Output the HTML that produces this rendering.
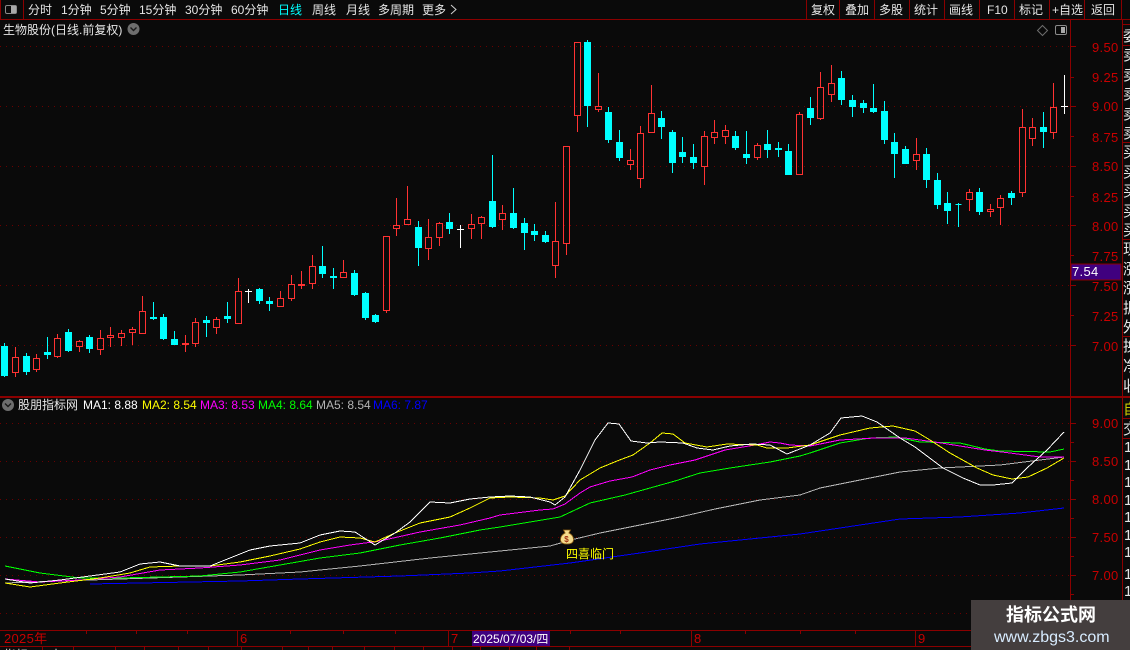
<!DOCTYPE html>
<html><head><meta charset="utf-8"><title>生物股份</title>
<style>
html,body{margin:0;padding:0;background:#0a0a0a;width:1130px;height:650px;overflow:hidden}
svg{display:block;position:absolute;left:0;top:0}
text{font-family:"Liberation Sans","WenQuanYi Zen Hei","Noto Sans CJK SC",sans-serif;font-size:12px;fill:#e6e6e6}
.ax text{fill:#c80000;font-family:"Liberation Sans",sans-serif;font-size:13px;letter-spacing:.3px}
.r text{font-size:15px;fill:#e6e6e6}
.c{shape-rendering:crispEdges;fill:none;stroke-width:1}
</style></head><body>
<svg width="1130" height="650" viewBox="0 0 1130 650" xmlns="http://www.w3.org/2000/svg">
<rect width="1130" height="650" fill="#0a0a0a"/>
<!-- grid -->
<g stroke="#6a0000" stroke-width="1" stroke-dasharray="1 5" shape-rendering="crispEdges">
<path d="M0 46.5H1070M0 106.5H1070M0 166.5H1070M0 225.5H1070M0 285.5H1070M0 345.5H1070M0 423.5H1070M0 461.5H1070M0 499.5H1070M0 537.5H1070M0 575.5H1070M0 613.5H1070"/>
</g>
<!-- candles red -->
<path class="c" stroke="#ff3232" d="M15.5 347V357M15.5 373V377M12.5 357.5h6V372.5h-6z
M36.5 354V358M36.5 370V372M33.5 358.5h6V369.5h-6z
M57.5 334V338M57.5 357V358M54.5 338.5h6V356.5h-6z
M79.5 340V341M79.5 347V352M76.5 341.5h6V346.5h-6z
M100.5 330V338M100.5 350V355M97.5 338.5h6V349.5h-6z
M110.5 327V335M110.5 338V347M107.5 335.5h6V337.5h-6z
M121.5 330V333M121.5 338V346M118.5 333.5h6V337.5h-6z
M132.5 327V329M132.5 333V345M129.5 329.5h6V332.5h-6z
M142.5 296V311M139.5 311.5h6V333.5h-6z
M185.5 335V343M185.5 345V352M182.5 343.5h6V344.5h-6z
M195.5 318V322M195.5 344V347M192.5 322.5h6V343.5h-6z
M216.5 317V319M216.5 328V334M213.5 319.5h6V327.5h-6z
M238.5 278V291M235.5 291.5h6V323.5h-6z
M280.5 291V298M277.5 298.5h6V306.5h-6z
M291.5 275V284M291.5 299V301M288.5 284.5h6V298.5h-6z
M301.5 271V284M301.5 286V289M298.5 284.5h6V285.5h-6z
M312.5 255V266M312.5 284V289M309.5 266.5h6V283.5h-6z
M343.5 260V272M340.5 272.5h6V277.5h-6z
M386.5 311V313M383.5 236.5h6V310.5h-6z
M396.5 198V225M396.5 229V236M393.5 225.5h6V228.5h-6z
M407.5 186V219M404.5 219.5h6V224.5h-6z
M428.5 219V237M428.5 249V260M425.5 237.5h6V248.5h-6z
M439.5 222V223M439.5 238V246M436.5 223.5h6V237.5h-6z
M471.5 214V224M471.5 229V239M468.5 224.5h6V228.5h-6z
M481.5 216V217M481.5 224V239M478.5 217.5h6V223.5h-6z
M502.5 205V213M502.5 220V230M499.5 213.5h6V219.5h-6z
M555.5 202V241M555.5 266V278M552.5 241.5h6V265.5h-6z
M566.5 244V255M563.5 146.5h6V243.5h-6z
M577.5 116V132M574.5 42.5h6V115.5h-6z
M598.5 73V106M598.5 110V112M595.5 106.5h6V109.5h-6z
M630.5 149V160M630.5 165V170M627.5 160.5h6V164.5h-6z
M640.5 126V133M640.5 179V188M637.5 133.5h6V178.5h-6z
M651.5 85V113M648.5 113.5h6V132.5h-6z
M704.5 131V136M704.5 167V185M701.5 136.5h6V166.5h-6z
M714.5 120V132M714.5 138V144M711.5 132.5h6V137.5h-6z
M725.5 125V130M725.5 137V144M722.5 130.5h6V136.5h-6z
M757.5 143V145M757.5 158V160M754.5 145.5h6V157.5h-6z
M799.5 112V114M796.5 114.5h6V174.5h-6z
M820.5 72V87M820.5 119V120M817.5 87.5h6V118.5h-6z
M831.5 65V83M831.5 95V102M828.5 83.5h6V94.5h-6z
M916.5 138V154M916.5 161V170M913.5 154.5h6V160.5h-6z
M969.5 189V192M969.5 200V211M966.5 192.5h6V199.5h-6z
M990.5 204V209M990.5 212V217M987.5 209.5h6V211.5h-6z
M1000.5 195V198M1000.5 208V225M997.5 198.5h6V207.5h-6z
M1022.5 109V127M1022.5 193V197M1019.5 127.5h6V192.5h-6z
M1032.5 118V127M1032.5 139V146M1029.5 127.5h6V138.5h-6z
M1053.5 83V107M1053.5 133V139M1050.5 107.5h6V132.5h-6z"/>
<!-- candles cyan -->
<path class="c" stroke="#00ffff" style="fill:#00ffff" d="M4.5 343V377M1.5 346.5h6V375.5h-6z
M26.5 353V375M23.5 356.5h6V371.5h-6z
M47.5 337V359M44.5 352.5h6V354.5h-6z
M68.5 329V352M65.5 332.5h6V350.5h-6z
M89.5 335V353M86.5 337.5h6V348.5h-6z
M153.5 302V320M150.5 317.5h6V318.5h-6z
M163.5 314V340M160.5 317.5h6V338.5h-6z
M174.5 331V345M171.5 339.5h6V344.5h-6z
M206.5 316V337M203.5 320.5h6V322.5h-6z
M227.5 302V323M224.5 316.5h6V318.5h-6z
M259.5 288V304M256.5 289.5h6V300.5h-6z
M269.5 297V311M266.5 301.5h6V303.5h-6z
M322.5 246V278M319.5 266.5h6V273.5h-6z
M333.5 268V289M330.5 276.5h6V277.5h-6z
M354.5 270V296M351.5 273.5h6V294.5h-6z
M365.5 292V320M362.5 293.5h6V317.5h-6z
M375.5 314V323M372.5 315.5h6V321.5h-6z
M418.5 221V266M415.5 227.5h6V247.5h-6z
M449.5 213V234M446.5 222.5h6V228.5h-6z
M492.5 155V228M489.5 201.5h6V226.5h-6z
M513.5 188V229M510.5 213.5h6V227.5h-6z
M524.5 218V250M521.5 223.5h6V232.5h-6z
M534.5 224V241M531.5 231.5h6V234.5h-6z
M545.5 231V243M542.5 235.5h6V241.5h-6z
M587.5 40V127M584.5 42.5h6V105.5h-6z
M608.5 107V143M605.5 112.5h6V139.5h-6z
M619.5 130V161M616.5 142.5h6V157.5h-6z
M661.5 111V139M658.5 118.5h6V126.5h-6z
M672.5 130V173M669.5 132.5h6V162.5h-6z
M682.5 137V163M679.5 152.5h6V156.5h-6z
M693.5 144V169M690.5 157.5h6V162.5h-6z
M735.5 131V150M732.5 136.5h6V147.5h-6z
M746.5 131V164M743.5 154.5h6V157.5h-6z
M767.5 130V158M764.5 144.5h6V149.5h-6z
M778.5 142V157M775.5 148.5h6V149.5h-6z
M788.5 144V175M785.5 151.5h6V174.5h-6z
M810.5 97V125M807.5 108.5h6V117.5h-6z
M841.5 71V105M838.5 78.5h6V99.5h-6z
M852.5 95V117M849.5 100.5h6V106.5h-6z
M863.5 100V113M860.5 103.5h6V107.5h-6z
M873.5 84V113M870.5 108.5h6V111.5h-6z
M884.5 101V144M881.5 111.5h6V139.5h-6z
M894.5 133V178M891.5 142.5h6V153.5h-6z
M905.5 146V164M902.5 149.5h6V163.5h-6z
M926.5 148V188M923.5 154.5h6V179.5h-6z
M937.5 173V209M934.5 180.5h6V204.5h-6z
M947.5 192V224M944.5 203.5h6V210.5h-6z
M958.5 203V227M955.5 204.5h6V204.5h-6z
M979.5 188V215M976.5 192.5h6V211.5h-6z
M1011.5 191V205M1008.5 193.5h6V197.5h-6z
M1043.5 112V148M1040.5 127.5h6V131.5h-6z"/>
<!-- white crosses -->
<path class="c" stroke="#ffffff" d="M248.5 289V303M245 291.5h7M460.5 225V248M457 229.5h7M1064.5 75V114M1061 106.5h7"/>
<!-- lines -->
<g class="c">
<polyline stroke="#0000ff" points="90,584 240,581 300,579 400,576 470,573 500,571 570,563 640,553 700,544 800,534 860,525 900,519 960,517 1020,513 1064,508"/>
<polyline stroke="#b4b4b4" points="5,583 60,581 120,579 180,577 240,575 300,572 360,566 430,558 480,553 500,551 550,546 575,539 600,533 640,525 680,517 715,509 760,500 800,495 820,488 860,480 900,472 940,468 1000,465 1040,460 1064,457"/>
<polyline stroke="#00ff00" points="5,566 40,573 80,578 120,578 160,577 200,576 240,572 280,565 320,558 360,553 400,545 440,538 480,530 500,527 530,522 560,517 590,503 625,495 650,488 675,481 700,473 730,468 770,462 800,456 810,453 840,443 870,438 895,437 920,442 960,443 985,449 1000,451 1050,452 1064,449"/>
<polyline stroke="#ff00ff" points="5,579 40,582 80,580 120,577 160,570 200,568 240,565 280,560 320,550 350,545 380,541 420,532 460,525 490,518 500,515 540,510 553,509 565,504 580,493 590,487 610,481 632,477 650,470 670,465 695,460 725,450 755,445 770,442 780,443 790,445 810,446 840,440 875,438 905,438 935,442 960,446 985,450 1010,453 1040,457 1064,457"/>
<polyline stroke="#ffff00" points="5,583 30,587 60,583 100,578 130,573 150,567 180,566 210,566 240,562 270,556 300,549 320,542 340,537 360,538 375,542 395,533 420,523 450,517 470,508 490,498 510,497 540,498 553,500 565,496 580,480 600,468 617,461 633,455 650,443 662,433 673,434 685,443 707,447 727,444 757,445 767,448 787,448 810,445 840,435 870,428 893,426 915,431 930,440 950,453 977,468 993,475 1012,479 1028,477 1047,468 1064,458"/>
<polyline stroke="#ffffff" points="5,579 30,583 60,580 90,576 120,572 140,564 160,562 180,566 210,566 230,558 250,550 270,546 300,543 320,535 340,531 355,532 375,545 395,533 410,522 430,502 450,503 470,499 490,497 510,496 530,497 550,502 555,505 565,497 580,470 595,440 608,423 619,424 631,441 647,443 660,442 683,443 697,448 713,450 730,446 752,444 770,445 787,454 810,445 830,433 841,418 862,416 877,422 900,438 915,447 943,468 963,478 980,485 993,485 1012,483 1027,468 1047,450 1064,432"/>
</g>
<!-- frame -->
<g fill="#8b0000" shape-rendering="crispEdges">
<rect x="0" y="19" width="1130" height="1"/>
<rect x="23" y="0" width="1" height="19"/>
<rect x="0" y="0" width="1" height="19"/>
<rect x="806" y="0" width="1" height="19"/><rect x="839" y="0" width="1" height="19"/><rect x="874" y="0" width="1" height="19"/><rect x="909" y="0" width="1" height="19"/><rect x="944" y="0" width="1" height="19"/><rect x="979" y="0" width="1" height="19"/><rect x="1014" y="0" width="1" height="19"/><rect x="1049" y="0" width="1" height="19"/><rect x="1084" y="0" width="1" height="19"/><rect x="1121" y="0" width="1" height="19"/>
<rect x="1070" y="20" width="1" height="610"/>
<rect x="1122" y="20" width="1" height="630"/>
<rect x="0" y="396" width="1122" height="2"/>
<rect x="0" y="630" width="1122" height="1"/>
<rect x="0" y="646" width="1122" height="1"/>
<rect x="1122" y="24" width="8" height="1"/><rect x="1122" y="45" width="8" height="1"/><rect x="1122" y="142" width="8" height="1"/><rect x="1122" y="239" width="8" height="1"/><rect x="1122" y="336" width="8" height="1"/><rect x="1122" y="396" width="8" height="2"/><rect x="1122" y="418" width="8" height="1"/><rect x="1122" y="438" width="8" height="1"/>
<!-- axis ticks -->
<path d="M1071 46h5v1h-5zM1071 77h3v1h-3zM1071 106h5v1h-5zM1071 136h3v1h-3zM1071 166h5v1h-5zM1071 196h3v1h-3zM1071 225h5v1h-5zM1071 255h3v1h-3zM1071 285h5v1h-5zM1071 315h3v1h-3zM1071 345h5v1h-5zM1071 423h5v1h-5zM1071 442h3v1h-3zM1071 461h5v1h-5zM1071 480h3v1h-3zM1071 499h5v1h-5zM1071 518h3v1h-3zM1071 537h5v1h-5zM1071 556h3v1h-3zM1071 575h5v1h-5zM1071 594h3v1h-3z"/>
<!-- bottom ticks -->
<path d="M86 631h1v3h-1zM136 631h1v3h-1zM187 631h1v3h-1zM290 631h1v3h-1zM343 631h1v3h-1zM395 631h1v3h-1zM570 631h1v3h-1zM237 631h1v15h-1zM448 631h1v15h-1zM691 631h1v15h-1zM915 631h1v15h-1zM620 631h1v3h-1zM745 631h1v3h-1zM800 631h1v3h-1zM855 631h1v3h-1z"/>
<!-- bottom strip separators -->
<path d="M42 647h1v3h-1zM73 647h1v3h-1zM115 647h1v3h-1zM144 647h1v3h-1zM178 647h1v3h-1zM208 647h1v3h-1zM241 647h1v3h-1zM282 647h1v3h-1zM308 647h1v3h-1zM332 647h1v3h-1zM364 647h1v3h-1zM394 647h1v3h-1zM423 647h1v3h-1zM452 647h1v3h-1zM480 647h1v3h-1zM509 647h1v3h-1zM536 647h1v3h-1zM569 647h1v3h-1z"/>
</g>
<!-- axis labels -->
<g class="ax">
<text x="1092" y="52">9.50</text><text x="1092" y="82">9.25</text><text x="1092" y="111">9.00</text><text x="1092" y="142">8.75</text><text x="1092" y="171">8.50</text><text x="1092" y="202">8.25</text><text x="1092" y="231">8.00</text><text x="1092" y="261">7.75</text><text x="1092" y="291">7.50</text><text x="1092" y="321">7.25</text><text x="1092" y="351">7.00</text>
<text x="1092" y="428">9.00</text><text x="1092" y="466">8.50</text><text x="1092" y="504">8.00</text><text x="1092" y="542">7.50</text><text x="1092" y="580">7.00</text>
</g>
<!-- current price tag -->
<rect x="1071" y="264" width="50" height="16" fill="#40007f" stroke="#8b0000" stroke-width="1" shape-rendering="crispEdges"/>
<text x="1072" y="276" style="font-size:13px;letter-spacing:.3px;fill:#fff">7.54</text>
<!-- toolbar -->
<rect x="5.5" y="5.5" width="11" height="8" rx="1.5" fill="#0a0a0a" stroke="#8a8a8a"/>
<rect x="11" y="6" width="5" height="7" fill="#a8a8a8"/>
<g>
<text x="28" y="14">分时</text><text x="61" y="14">1分钟</text><text x="100" y="14">5分钟</text><text x="139" y="14">15分钟</text><text x="185" y="14">30分钟</text><text x="231" y="14">60分钟</text>
<text x="278" y="14" style="fill:#00ffff">日线</text>
<text x="312" y="14">周线</text><text x="346" y="14">月线</text><text x="378" y="14">多周期</text><text x="422" y="14">更多</text>
<path d="M451 5l5 4.5-5 4.5" fill="none" stroke="#d0d0d0"/>
<text x="811" y="14">复权</text><text x="845" y="14">叠加</text><text x="879" y="14">多股</text><text x="914" y="14">统计</text><text x="949" y="14">画线</text><text x="987" y="14">F10</text><text x="1019" y="14">标记</text><text x="1052" y="14">+自选</text><text x="1091" y="14">返回</text>
</g>
<!-- title -->
<text x="3" y="34">生物股份(日线.前复权)</text>
<circle cx="133.5" cy="29" r="6" fill="#6e6e6e"/>
<path d="M130.5 27.5l3 3 3-3" fill="none" stroke="#1a1a1a" stroke-width="1.4"/>
<!-- top right icons -->
<path d="M1042.5 25.5l5 5-5 5-5-5z" fill="none" stroke="#6e6e6e"/>
<rect x="1055.5" y="25.5" width="11" height="9" rx="1.5" fill="#0a0a0a" stroke="#8a8a8a"/>
<rect x="1061" y="27" width="4" height="6" fill="#a8a8a8"/>
<!-- lower legend -->
<circle cx="8" cy="405" r="6" fill="#6e6e6e"/>
<path d="M5 403.5l3 3 3-3" fill="none" stroke="#1a1a1a" stroke-width="1.4"/>
<text x="18" y="409">股朋指标网</text>
<text x="83" y="409" style="fill:#fff">MA1: 8.88</text>
<text x="142" y="409" style="fill:#ffff00">MA2: 8.54</text>
<text x="200" y="409" style="fill:#ff00ff">MA3: 8.53</text>
<text x="258" y="409" style="fill:#00ff00">MA4: 8.64</text>
<text x="316" y="409" style="fill:#b4b4b4">MA5: 8.54</text>
<text x="373" y="409" style="fill:#0000ff">MA6: 7.87</text>
<!-- money bag -->
<path d="M563.5 530h7l-1.6 3c3 1.5 4.6 4 4.6 6.500 0 3-2.500 4.500-6.500 4.500s-6.500-1.500-6.500-4.500c0-2.500 1.600-5 4.600-6.500z" fill="#f5dc8c" stroke="#8a5a10" stroke-width=".8"/>
<text x="564.300" y="542" style="font-size:8px;fill:#a03010;font-weight:bold">$</text>
<text x="566" y="558" style="fill:#ffff00">四喜临门</text>
<!-- right strip -->
<g class="r">
<text x="1123" y="41">委</text>
<text x="1123" y="60">卖</text><text x="1123" y="80">卖</text><text x="1123" y="99">卖</text><text x="1123" y="119">卖</text><text x="1123" y="138">卖</text>
<text x="1123" y="157">买</text><text x="1123" y="177">买</text><text x="1123" y="196">买</text><text x="1123" y="216">买</text><text x="1123" y="235">买</text>
<text x="1123" y="254">现</text><text x="1123" y="274">涨</text><text x="1123" y="293">涨</text><text x="1123" y="313">振</text><text x="1123" y="332">外</text>
<text x="1123" y="351">换</text><text x="1123" y="371">净</text><text x="1123" y="391">收</text>
<text x="1123" y="414" style="fill:#c8c800">自</text><text x="1123" y="434">交</text>
<text x="1124" y="452">1</text><text x="1124" y="470">1</text><text x="1124" y="487">1</text><text x="1124" y="505">1</text><text x="1124" y="522">1</text><text x="1124" y="540">1</text><text x="1124" y="557">1</text><text x="1124" y="579">1</text><text x="1124" y="596">1</text>
</g>
<!-- bottom axis text -->
<g class="ax">
<text x="4" y="643" style="font-family:'Liberation Sans','WenQuanYi Zen Hei',sans-serif">2025年</text>
<text x="240" y="643">6</text><text x="451" y="643">7</text><text x="694" y="643">8</text><text x="918" y="643">9</text>
</g>
<rect x="472" y="631" width="78" height="15" fill="#40007f"/>
<text x="473" y="643" style="fill:#fff">2025/07/03/四</text>
<text x="4" y="659">指标</text><text x="50" y="659">十</text>
<!-- watermark -->
<rect x="971" y="600" width="159" height="50" fill="#443e3e"/>
<text x="1006" y="621" style="font-size:18px;font-weight:bold;fill:#fff;font-family:'Liberation Sans','Noto Sans CJK SC',sans-serif">指标公式网</text>
<text x="994" y="642" style="font-size:16px;fill:#d8ecff">www.zbgs3.com</text>
</svg>
</body></html>
